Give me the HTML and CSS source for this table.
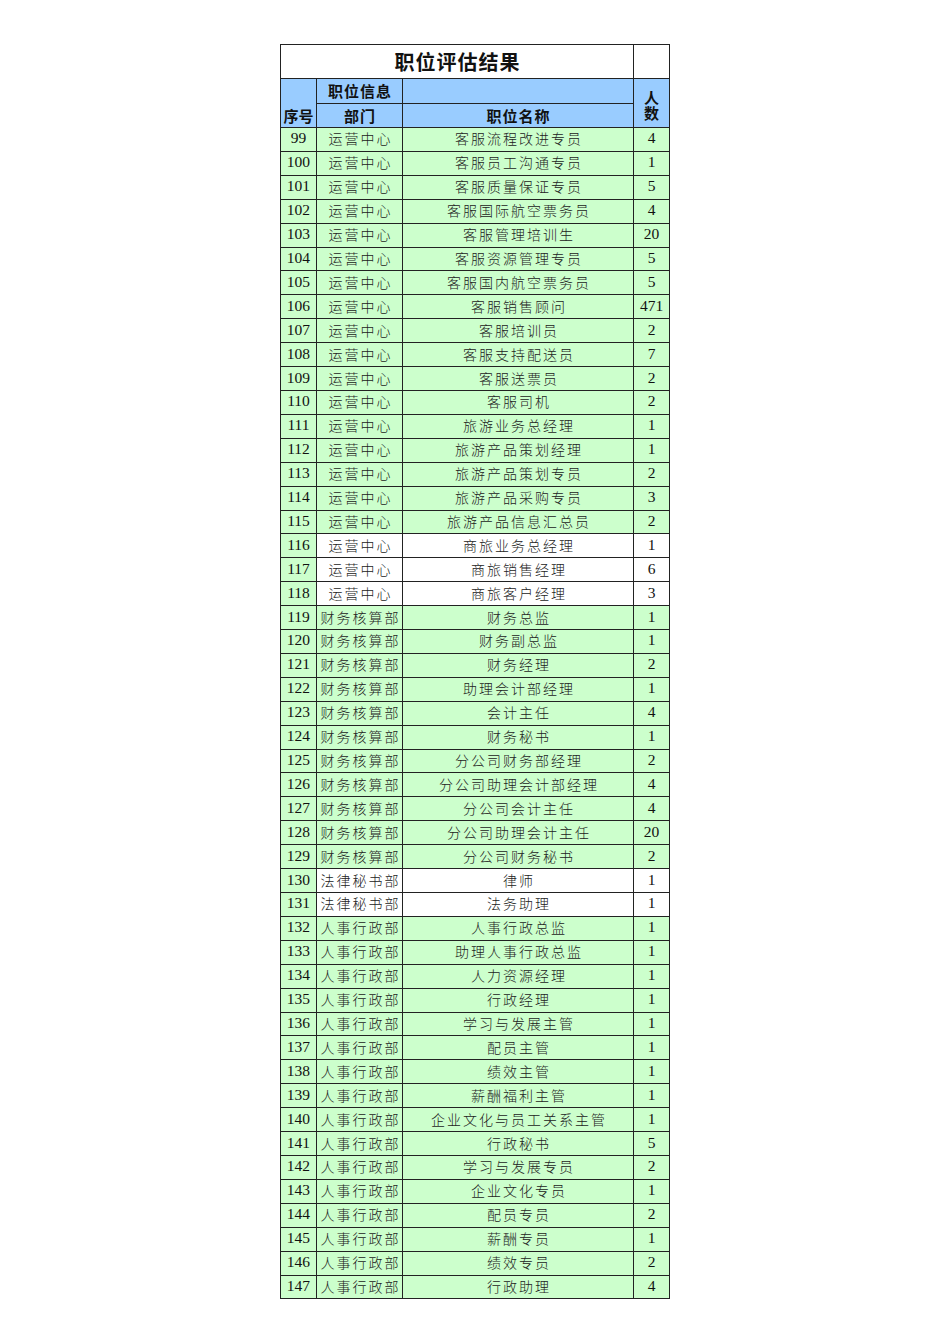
FILE: index.html
```html
<!DOCTYPE html>
<html lang="zh-CN">
<head>
<meta charset="utf-8">
<title>职位评估结果</title>
<link rel="stylesheet" href="styles.css">
</head>
<body>
<table class="sheet">
  <colgroup>
    <col class="c-seq"><col class="c-dept"><col class="c-name"><col class="c-count">
  </colgroup>
  <thead>
    <tr class="r-title">
      <th colspan="3" class="title">职位评估结果</th>
      <th class="blank"></th>
    </tr>
    <tr class="r-h1">
      <th rowspan="2" class="hd hd-seq">序号</th>
      <th class="hd">职位信息</th>
      <th class="hd"></th>
      <th rowspan="2" class="hd hd-count"><span class="stack">人数</span></th>
    </tr>
    <tr class="r-h2">
      <th class="hd">部门</th>
      <th class="hd">职位名称</th>
    </tr>
  </thead>
  <tbody>
    <tr><td class="num">99</td><td class="cn">运营中心</td><td class="cn">客服流程改进专员</td><td class="num">4</td></tr>
    <tr><td class="num">100</td><td class="cn">运营中心</td><td class="cn">客服员工沟通专员</td><td class="num">1</td></tr>
    <tr><td class="num">101</td><td class="cn">运营中心</td><td class="cn">客服质量保证专员</td><td class="num">5</td></tr>
    <tr><td class="num">102</td><td class="cn">运营中心</td><td class="cn">客服国际航空票务员</td><td class="num">4</td></tr>
    <tr><td class="num">103</td><td class="cn">运营中心</td><td class="cn">客服管理培训生</td><td class="num">20</td></tr>
    <tr><td class="num">104</td><td class="cn">运营中心</td><td class="cn">客服资源管理专员</td><td class="num">5</td></tr>
    <tr><td class="num">105</td><td class="cn">运营中心</td><td class="cn">客服国内航空票务员</td><td class="num">5</td></tr>
    <tr><td class="num">106</td><td class="cn">运营中心</td><td class="cn">客服销售顾问</td><td class="num">471</td></tr>
    <tr><td class="num">107</td><td class="cn">运营中心</td><td class="cn">客服培训员</td><td class="num">2</td></tr>
    <tr><td class="num">108</td><td class="cn">运营中心</td><td class="cn">客服支持配送员</td><td class="num">7</td></tr>
    <tr><td class="num">109</td><td class="cn">运营中心</td><td class="cn">客服送票员</td><td class="num">2</td></tr>
    <tr><td class="num">110</td><td class="cn">运营中心</td><td class="cn">客服司机</td><td class="num">2</td></tr>
    <tr><td class="num">111</td><td class="cn">运营中心</td><td class="cn">旅游业务总经理</td><td class="num">1</td></tr>
    <tr><td class="num">112</td><td class="cn">运营中心</td><td class="cn">旅游产品策划经理</td><td class="num">1</td></tr>
    <tr><td class="num">113</td><td class="cn">运营中心</td><td class="cn">旅游产品策划专员</td><td class="num">2</td></tr>
    <tr><td class="num">114</td><td class="cn">运营中心</td><td class="cn">旅游产品采购专员</td><td class="num">3</td></tr>
    <tr><td class="num">115</td><td class="cn">运营中心</td><td class="cn">旅游产品信息汇总员</td><td class="num">2</td></tr>
    <tr class="plain"><td class="num">116</td><td class="cn">运营中心</td><td class="cn">商旅业务总经理</td><td class="num">1</td></tr>
    <tr class="plain"><td class="num">117</td><td class="cn">运营中心</td><td class="cn">商旅销售经理</td><td class="num">6</td></tr>
    <tr class="plain"><td class="num">118</td><td class="cn">运营中心</td><td class="cn">商旅客户经理</td><td class="num">3</td></tr>
    <tr><td class="num">119</td><td class="cn">财务核算部</td><td class="cn">财务总监</td><td class="num">1</td></tr>
    <tr><td class="num">120</td><td class="cn">财务核算部</td><td class="cn">财务副总监</td><td class="num">1</td></tr>
    <tr><td class="num">121</td><td class="cn">财务核算部</td><td class="cn">财务经理</td><td class="num">2</td></tr>
    <tr><td class="num">122</td><td class="cn">财务核算部</td><td class="cn">助理会计部经理</td><td class="num">1</td></tr>
    <tr><td class="num">123</td><td class="cn">财务核算部</td><td class="cn">会计主任</td><td class="num">4</td></tr>
    <tr><td class="num">124</td><td class="cn">财务核算部</td><td class="cn">财务秘书</td><td class="num">1</td></tr>
    <tr><td class="num">125</td><td class="cn">财务核算部</td><td class="cn">分公司财务部经理</td><td class="num">2</td></tr>
    <tr><td class="num">126</td><td class="cn">财务核算部</td><td class="cn">分公司助理会计部经理</td><td class="num">4</td></tr>
    <tr><td class="num">127</td><td class="cn">财务核算部</td><td class="cn">分公司会计主任</td><td class="num">4</td></tr>
    <tr><td class="num">128</td><td class="cn">财务核算部</td><td class="cn">分公司助理会计主任</td><td class="num">20</td></tr>
    <tr><td class="num">129</td><td class="cn">财务核算部</td><td class="cn">分公司财务秘书</td><td class="num">2</td></tr>
    <tr class="plain"><td class="num">130</td><td class="cn">法律秘书部</td><td class="cn">律师</td><td class="num">1</td></tr>
    <tr class="plain"><td class="num">131</td><td class="cn">法律秘书部</td><td class="cn">法务助理</td><td class="num">1</td></tr>
    <tr><td class="num">132</td><td class="cn">人事行政部</td><td class="cn">人事行政总监</td><td class="num">1</td></tr>
    <tr><td class="num">133</td><td class="cn">人事行政部</td><td class="cn">助理人事行政总监</td><td class="num">1</td></tr>
    <tr><td class="num">134</td><td class="cn">人事行政部</td><td class="cn">人力资源经理</td><td class="num">1</td></tr>
    <tr><td class="num">135</td><td class="cn">人事行政部</td><td class="cn">行政经理</td><td class="num">1</td></tr>
    <tr><td class="num">136</td><td class="cn">人事行政部</td><td class="cn">学习与发展主管</td><td class="num">1</td></tr>
    <tr><td class="num">137</td><td class="cn">人事行政部</td><td class="cn">配员主管</td><td class="num">1</td></tr>
    <tr><td class="num">138</td><td class="cn">人事行政部</td><td class="cn">绩效主管</td><td class="num">1</td></tr>
    <tr><td class="num">139</td><td class="cn">人事行政部</td><td class="cn">薪酬福利主管</td><td class="num">1</td></tr>
    <tr><td class="num">140</td><td class="cn">人事行政部</td><td class="cn">企业文化与员工关系主管</td><td class="num">1</td></tr>
    <tr><td class="num">141</td><td class="cn">人事行政部</td><td class="cn">行政秘书</td><td class="num">5</td></tr>
    <tr><td class="num">142</td><td class="cn">人事行政部</td><td class="cn">学习与发展专员</td><td class="num">2</td></tr>
    <tr><td class="num">143</td><td class="cn">人事行政部</td><td class="cn">企业文化专员</td><td class="num">1</td></tr>
    <tr><td class="num">144</td><td class="cn">人事行政部</td><td class="cn">配员专员</td><td class="num">2</td></tr>
    <tr><td class="num">145</td><td class="cn">人事行政部</td><td class="cn">薪酬专员</td><td class="num">1</td></tr>
    <tr><td class="num">146</td><td class="cn">人事行政部</td><td class="cn">绩效专员</td><td class="num">2</td></tr>
    <tr><td class="num">147</td><td class="cn">人事行政部</td><td class="cn">行政助理</td><td class="num">4</td></tr>
  </tbody>
</table>
</body>
</html>
```

FILE: styles.css
```css
html, body {
  margin: 0;
  padding: 0;
  background: #ffffff;
}

body {
  padding-top: 44px;
  font-family: "Noto Sans CJK SC", "Liberation Serif", serif;
  color: #111;
}

.sheet {
  margin: 0 auto;
  width: 389px;
  table-layout: fixed;
  border-collapse: collapse;
  border: 1px solid #000;
}

.c-seq { width: 36px; }
.c-dept { width: 86px; }
.c-name { width: 231px; }
.c-count { width: 36px; }

.sheet th,
.sheet td {
  border: 1px solid #222;
  padding: 0;
  text-align: center;
  vertical-align: middle;
  overflow: hidden;
  white-space: nowrap;
}

.r-title { height: 34px; }
.r-h1 { height: 25px; }
.r-h2 { height: 24px; }

.sheet th.title {
  background: #fff;
  font-family: "Noto Sans CJK SC", sans-serif;
  font-weight: 700;
  font-size: 20px;
  letter-spacing: 1px;
  padding-left: 1px;
  color: #111;
}

.sheet th.blank { background: #fff; }

.sheet th.hd {
  background: #99ccff;
  font-family: "Noto Sans CJK SC", sans-serif;
  font-weight: 700;
  font-size: 15px;
  line-height: 16px;
  letter-spacing: 1px;
  padding-left: 1px;
  color: #111;
}

.sheet th.hd-seq {
  vertical-align: bottom;
  padding: 0 0 3px 0;
  letter-spacing: 0;
}

.sheet th.hd-count {
  white-space: normal;
  padding: 4px 0 0 0;
  letter-spacing: 0;
}

.stack {
  display: block;
  width: 15px;
  margin: 0 auto;
  line-height: 15px;
  white-space: normal;
  word-break: break-all;
}

.sheet tbody tr { height: 23.92px; }

.sheet tbody td {
  background: #ccffcc;
  line-height: 18px;
  padding-bottom: 2px;
}

.sheet tbody tr.plain td + td {
  background: #ffffff;
}

.sheet td.num {
  font-family: "Liberation Serif", "Times New Roman", serif;
  font-size: 15.5px;
  color: #111;
}

.sheet td.cn {
  font-family: "Noto Sans CJK SC", sans-serif;
  font-weight: 300;
  font-size: 14px;
  letter-spacing: 2px;
  padding-left: 2px;
  color: #222;
}
```
